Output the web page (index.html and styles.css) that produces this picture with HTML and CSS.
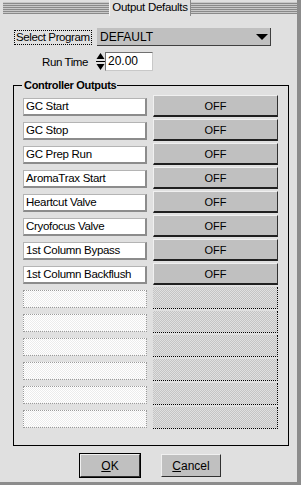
FILE: index.html
```html
<!DOCTYPE html>
<html lang="en">
<head>
    <meta charset="UTF-8">
    <title>Output Defaults</title>
    <link rel="stylesheet" href="styles.css">
</head>
<body>

    <div class="dialog">
        <div class="titlebar">
            <span class="stripes"></span>
            <span class="title">Output Defaults</span>
            <span class="stripes"></span>
        </div>

        <div class="program-row">
            <span class="focus-label">Select Program</span>
            <div class="select">
                <span>DEFAULT</span>
                <svg class="arrow" width="12" height="7" viewBox="0 0 12 7">
                    <polygon points="0,0 12,0 6,6" fill="#000"/>
                </svg>
            </div>
        </div>

        <div class="runtime-row">
            <span class="runtime-label">Run Time</span>
            <svg class="spinner" width="9" height="19" viewBox="0 0 9 19">
                <polygon points="4.5,1 8.5,7 0.5,7" fill="#000"/>
                <rect x="0" y="9" width="9" height="1" fill="#000"/>
                <polygon points="0.5,12 8.5,12 4.5,18" fill="#000"/>
            </svg>
            <span class="number-box">20.00</span>
        </div>

        <fieldset class="outputs">
            <legend>Controller Outputs</legend>
            <div class="output-list">
                <div class="output-row"><span class="name-box">GC Start</span><span class="state-btn">OFF</span></div>
                <div class="output-row"><span class="name-box">GC Stop</span><span class="state-btn">OFF</span></div>
                <div class="output-row"><span class="name-box">GC Prep Run</span><span class="state-btn">OFF</span></div>
                <div class="output-row"><span class="name-box">AromaTrax Start</span><span class="state-btn">OFF</span></div>
                <div class="output-row"><span class="name-box">Heartcut Valve</span><span class="state-btn">OFF</span></div>
                <div class="output-row"><span class="name-box">Cryofocus Valve</span><span class="state-btn">OFF</span></div>
                <div class="output-row"><span class="name-box">1st Column Bypass</span><span class="state-btn">OFF</span></div>
                <div class="output-row"><span class="name-box">1st Column Backflush</span><span class="state-btn">OFF</span></div>
                <div class="output-row disabled"><span class="name-box"></span><span class="state-btn"></span></div>
                <div class="output-row disabled"><span class="name-box"></span><span class="state-btn"></span></div>
                <div class="output-row disabled"><span class="name-box"></span><span class="state-btn"></span></div>
                <div class="output-row disabled"><span class="name-box"></span><span class="state-btn"></span></div>
                <div class="output-row disabled"><span class="name-box"></span><span class="state-btn"></span></div>
                <div class="output-row disabled"><span class="name-box"></span><span class="state-btn"></span></div>
            </div>
        </fieldset>

        <div class="actions">
            <button class="btn btn-default"><u>O</u>K</button>
            <button class="btn"><u>C</u>ancel</button>
        </div>
    </div>

</body>
</html>
```

FILE: styles.css
```css
body {
    margin: 0;
    padding: 0;
    font-family: "Liberation Sans", Arial, sans-serif;
    font-size: 11px;
    color: #000;
}
.dialog {
    width: 297px;
    height: 482px;
    background-color: #e0e0e0;
    border-right: 4px solid #8c8c8c;
    border-bottom: 3px solid #8c8c8c;
}
.titlebar {
    display: flex;
    height: 16px;
    padding-left: 3px;
}
.stripes {
    flex: 1;
    margin-top: 2px;
    height: 12px;
    background: repeating-linear-gradient(to bottom, #c8c8c8 0 1px, #8a8a8a 1px 2px);
}
.title {
    flex: none;
    width: 80px;
    text-align: center;
    line-height: 15px;
    font-size: 11.5px;
    letter-spacing: -0.3px;
    white-space: nowrap;
    border-left: 1px solid #f4f4f4;
    border-right: 1px solid #8a8a8a;
}
.program-row {
    display: flex;
    align-items: center;
    margin-top: 12px;
    padding: 0 26px 0 14px;
    height: 18px;
}
.focus-label {
    flex: none;
    height: 13px;
    padding: 0 1px;
    line-height: 13px;
    font-size: 11.5px;
    letter-spacing: -0.4px;
    border: 1px dotted #000;
    white-space: nowrap;
}
.select {
    display: flex;
    align-items: center;
    justify-content: space-between;
    margin-left: auto;
    width: 174px;
    height: 18px;
    box-sizing: border-box;
    padding: 0 2px 0 3px;
    font-size: 12px;
    background-color: #c0c0c0;
    border-right: 1px solid #404040;
    border-bottom: 1px solid #404040;
}
.arrow {
    margin-top: 1px;
}
.runtime-row {
    display: flex;
    align-items: center;
    margin-top: 6px;
    height: 19px;
}
.runtime-label {
    width: 46px;
    margin-left: 42px;
    text-align: right;
    font-size: 11.5px;
    letter-spacing: -0.4px;
    white-space: nowrap;
}
.spinner {
    margin-left: 8px;
}
.number-box {
    width: 44px;
    height: 17px;
    line-height: 17px;
    padding-left: 2px;
    font-size: 12px;
    background-color: #fff;
    border-top: 1px solid #707070;
    border-left: 1px solid #707070;
    border-right: 1px solid #c8c8c8;
    border-bottom: 1px solid #c8c8c8;
}
.outputs {
    box-sizing: border-box;
    width: 276px;
    margin: 7px 0 0 13px;
    padding: 3px 10px 16px 9px;
    border: 1px solid #000;
}
.outputs legend {
    margin-left: -1px;
    padding: 0 1px 0 2px;
    font-weight: bold;
    font-size: 11px;
    letter-spacing: -0.3px;
    line-height: 14px;
}
.output-list {
    display: flex;
    flex-direction: column;
    gap: 2px;
}
.output-row {
    display: flex;
    height: 22px;
    gap: 6px;
}
.name-box {
    box-sizing: border-box;
    width: 124px;
    height: 18px;
    margin-top: 3px;
    padding-left: 2px;
    line-height: 15px;
    font-size: 11.5px;
    letter-spacing: -0.3px;
    white-space: nowrap;
    overflow: hidden;
    background-color: #fff;
    border-top: 1px solid #b4b4b4;
    border-left: 1px solid #b4b4b4;
    border-right: 2px solid #8c8c8c;
    border-bottom: 2px solid #8c8c8c;
}
.state-btn {
    box-sizing: border-box;
    width: 125px;
    height: 22px;
    line-height: 20px;
    text-align: center;
    background-color: #c0c0c0;
    border-top: 1px solid #f0f0f0;
    border-left: 1px solid #f0f0f0;
    border-right: 1px solid #303030;
    border-bottom: 2px solid #202020;
}
.output-row.disabled .name-box {
    border: 1px dotted #9a9a9a;
    background: repeating-conic-gradient(#ececec 0 25%, #ffffff 0 50%) 0 0 / 2px 2px;
}
.output-row.disabled .state-btn {
    border: none;
    border-right: 1px dotted #000;
    border-bottom: 1px dotted #000;
    background: repeating-conic-gradient(#c4c4c4 0 25%, #e0e0e0 0 50%) 0 0 / 2px 2px;
}
.actions {
    display: flex;
    justify-content: center;
    gap: 21px;
    margin-top: 8px;
    padding-left: 4px;
}
.btn {
    box-sizing: border-box;
    width: 60px;
    height: 23px;
    padding: 0;
    font-family: "Liberation Sans", Arial, sans-serif;
    font-size: 12px;
    color: #000;
    background-color: #c0c0c0;
    border-top: 1px solid #f0f0f0;
    border-left: 1px solid #f0f0f0;
    border-right: 1px solid #303030;
    border-bottom: 1px solid #303030;
}
.btn-default {
    box-shadow: 0 0 0 1px #000;
}
```
